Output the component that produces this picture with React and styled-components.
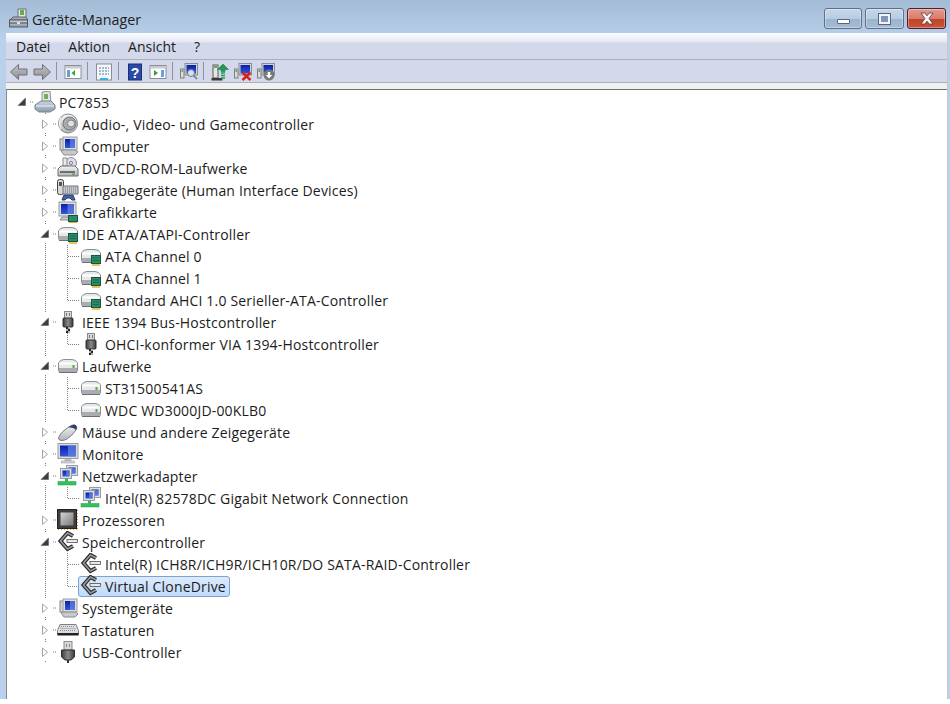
import React from 'react';
import styled, { createGlobalStyle } from 'styled-components';

const Global = createGlobalStyle`
  html, body { margin: 0; padding: 0; background: #fff; }
  body { font-family: "Open Sans", "Noto Sans", sans-serif; color: #1a1a1a; }
`;

const Frame = styled.div`
  width: 950px;
  height: 699px;
  display: flex;
  flex-direction: column;
  box-sizing: border-box;
  padding: 0 2px 0 6px;
  background: linear-gradient(to bottom, #a4bbd6 0, #b9d1ea 40px, #b9d1ea 100%);
`;
const TitleBar = styled.div`
  height: 33px;
  flex: none;
  display: flex;
  align-items: flex-start;
  padding: 8px 2px 0 2px;
  box-sizing: border-box;
`;
const Title = styled.div`
  margin-left: 3px;
  font-size: 14.3px;
  line-height: 23px;
  color: #222;
`;
const WinButtons = styled.div`
  margin-left: auto;
  display: flex;
  gap: 3px;
`;
const WinButton = styled.div`
  width: ${p => p.$w}px;
  height: 21px;
  box-sizing: border-box;
  display: flex;
  align-items: center;
  justify-content: center;
  border-radius: 3px;
  border: 1px solid ${p => (p.$close ? '#4e1f2b' : '#5f7088')};
  box-shadow: inset 0 0 0 1px rgba(255, 255, 255, 0.35);
  background: ${p =>
    p.$close
      ? 'linear-gradient(to bottom, #e39a8e 0, #d87c6c 50%, #bf4326 52%, #c9553a 100%)'
      : 'linear-gradient(to bottom, #c6d7e9 0, #b8cde2 50%, #9cb5cf 52%, #a4bcd5 100%)'};
`;
const MinGlyph = styled.div`
  width: 13px;
  height: 5px;
  margin-top: 6px;
  box-sizing: border-box;
  background: #fff;
  border: 1px solid #56657c;
  border-radius: 1px;
`;
const MaxGlyph = styled.div`
  width: 13px;
  height: 12px;
  box-sizing: border-box;
  background: #7f97b8;
  border: 3px solid #f2f4f7;
  outline: 1px solid #56657c;
  outline-offset: -1px;
`;
const Client = styled.div`
  flex: 1;
  display: flex;
  flex-direction: column;
  min-height: 0;
  background: #f0f0f0;
  border-right: 1px solid #c8c8c8;
`;
const MenuBar = styled.div`
  height: 27px;
  flex: none;
  box-sizing: border-box;
  display: flex;
  align-items: center;
  padding: 1px 0 0 1px;
  font-size: 14px;
  background: linear-gradient(to bottom, #fbfcfe 0, #e4e8f4 9px, #d3d9eb 10px, #d3d9eb 100%);
  border-bottom: 1px solid #adb0bc;
`;
const MenuItem = styled.div`
  padding: 0 9px;
  color: #1c1c1c;
`;
const ToolBar = styled.div`
  height: 23px;
  flex: none;
  box-sizing: border-box;
  display: flex;
  align-items: center;
  padding: 1px 0 0 1.5px;
  background: #d3d9eb;
  border-bottom: 1px solid #adb0bc;
`;
const ToolButton = styled.div`
  width: 23px;
  height: 22px;
  display: flex;
  align-items: center;
  justify-content: center;
`;
const ToolSep = styled.div`
  width: 1px;
  height: 18px;
  margin: -1px 4.5px 0 2.5px;
  background: #8f929c;
`;
const Band = styled.div`
  height: 6px;
  flex: none;
  background: #f0f0f0;
`;
const Tree = styled.div`
  flex: 1;
  min-height: 0;
  background: #fff;
  border-top: 1px solid #6f6f6f;
  border-left: 1px solid #8a8a8a;
  padding: 1px 0 0 4px;
  font-size: 14px;
`;
const Row = styled.div`
  height: 22px;
  display: flex;
  align-items: center;
`;

const dotsV = 'repeating-linear-gradient(to bottom, #7d7d7d 0 1px, transparent 1px 2px)';
const dotsH = 'repeating-linear-gradient(to right, #7d7d7d 0 1px, transparent 1px 2px)';

// guide cell: $line is the shape of the dotted line that runs through it
const Cell = styled.div`
  width: 23px;
  height: 22px;
  flex: none;
  background-repeat: no-repeat;
  ${p => p.$line === 'pipe' && `
    background-image: ${dotsV};
    background-size: 1px 22px;
    background-position: 11px 0;
  `}
  ${p => p.$line === 'tee' && `
    background-image: ${dotsV}, ${dotsH};
    background-size: 1px 22px, 11px 1px;
    background-position: 10px 0, 11px 11px;
  `}
  ${p => p.$line === 'end' && `
    background-image: ${dotsV}, ${dotsH};
    background-size: 1px 12px, 11px 1px;
    background-position: 10px 0, 11px 11px;
  `}
`;
const Label = styled.div`
  display: flex;
  align-items: center;
  height: 21px;
  box-sizing: border-box;
  margin-left: -2px;
  padding: 0 3px 0 1px;
  border: 1px solid ${p => (p.$selected ? '#7da2ce' : 'transparent')};
  border-radius: 3px;
  background: ${p => (p.$selected ? 'linear-gradient(to bottom, #dcebfc, #c1dbfc)' : 'transparent')};
`;
const IconBox = styled.div`
  width: 22px;
  height: 20px;
  flex: none;
  display: flex;
  align-items: center;
  justify-content: center;
`;
const Text = styled.span`
  margin-left: 3px;
  white-space: nowrap;
  letter-spacing: 0.18px;
  color: #1c1c1c;
`;
const Defs = styled.svg`
  display: block;
  width: 0;
  height: 0;
`;

const Ico = ({ size = 22, children }) => (
  <svg width={size} height={size} viewBox={`0 0 ${size} ${size}`}>{children}</svg>
);

const Drive = ({ chip }) => (
  <>
    <path d="M1.500 8Q3 4.500 7 4.500H15Q19 4.500 20.500 8V15Q20.500 17.500 18 17.500H4Q1.500 17.500 1.500 15Z" fill="#e7e9ea" stroke="#8b8f93" />
    <path d="M2 8.500H20" stroke="#fff" strokeWidth="2" />
    <rect x="2" y="13" width="18" height="4" fill="#a9adb1" />
    <path d="M2 17.500H20" stroke="#6c7074" />
    {chip ? (
      <>
        <rect x="11.500" y="10.500" width="9" height="8" fill="#2b8d68" stroke="#14573f" />
        <path d="M13.500 13h5M13.500 15.500h5" stroke="#0f4030" strokeDasharray="1 1" />
        <path d="M12 20H20" stroke="#e3b436" strokeWidth="1.600" />
      </>
    ) : (
      <rect x="15.500" y="10" width="2" height="3" fill="#58b030" />
    )}
  </>
);

const Plug = () => (
  <>
    <rect x="7.500" y="0.500" width="7" height="7" fill="#d8dadc" stroke="#8a8a8a" />
    <path d="M9.500 2v3M12.500 2v3" stroke="#777" />
    <rect x="6" y="7" width="10" height="9" rx="1" fill="url(#gDark)" stroke="#333" />
    <path d="M9 16h2v2H9zM11 18h2v2h-2zM9 20h2v2H9z" fill="#222" />
    <path d="M11 16h2v2h-2zM9 18h2v2H9zM11 20h2v2h-2z" fill="#b0b0b0" />
  </>
);

const Screen = ({ x = 3, y = 2, w = 15, h = 12 }) => (
  <>
    <rect x={x} y={y} width={w} height={h} fill="#dcdddd" stroke="#9a9c9f" />
    <rect x={x + 2} y={y + 2} width={w - 4} height={h - 4} fill="url(#gBlue)" />
    <rect x={x + 2 + (w - 4) / 2} y={y + 2} width={(w - 4) / 2} height={h - 4} fill="#6a86e6" opacity=".7" />
  </>
);

const Chevron = () => (
  <>
    <path d="M16 5L10.500 2 3.500 10l7 8 5.500-3" fill="none" stroke="#2c2c2c" strokeWidth="4" />
    <path d="M16 5L10.500 2 3.500 10l7 8 5.500-3" fill="none" stroke="#9a9a9a" strokeWidth="1.600" />
    <rect x="10" y="8.500" width="10.500" height="3" fill="#e8e8e8" stroke="#3a3a3a" strokeWidth=".7" />
  </>
);

const Pc = () => (
  <>
    <rect x="3" y="4" width="5" height="11" fill="#d5d6d8" stroke="#85888c" />
    <Screen x={6} y={2} w={14} h={13} />
    <path d="M4 16l2-1h12l3 2-3 3H7z" fill="#c7c9cc" stroke="#8a8c90" />
  </>
);

const icons = {
  pc: (
    <>
      <path d="M8 1l8-1 1 12H8z" fill="#e3e6e7" stroke="#8b9094" />
      <rect x="10" y="3" width="4" height="5" fill="#73b04e" />
      <path d="M1 14l6-4h10l4 4v4l-5 3H5l-4-3z" fill="url(#gSteel)" stroke="#75808c" />
      <path d="M2 15h18" stroke="#eef3f7" />
    </>
  ),
  audio: (
    <>
      <circle cx="11" cy="10.500" r="9.500" fill="url(#gSilver)" stroke="#85888c" />
      <circle cx="12.500" cy="10.500" r="6.500" fill="#a9acaf" stroke="#6f7276" />
      <circle cx="14" cy="10.500" r="3.500" fill="#e0e2e4" stroke="#808386" />
      <path d="M3.500 5Q1.500 10.500 3.500 16" fill="none" stroke="#fff" />
    </>
  ),
  computer: <Pc />,
  system: <Pc />,
  dvd: (
    <>
      <circle cx="14" cy="6" r="5.500" fill="#dcdde8" stroke="#8c8f99" />
      <circle cx="14" cy="6" r="1.500" fill="#fff" stroke="#777" />
      <path d="M6 1h4v8H6z" fill="#e9eaeb" stroke="#888" />
      <path d="M1 12l3-3h14l3 3v7H1z" fill="url(#gSilver)" stroke="#6a6d70" />
      <path d="M3 15h15" stroke="#444" strokeWidth="1.400" />
      <rect x="15" y="16.500" width="3" height="1.500" fill="#58b030" />
    </>
  ),
  input: (
    <>
      <rect x="0.500" y="0.500" width="6" height="15" rx="2" fill="#d8d9da" stroke="#444" />
      <rect x="2" y="3" width="3" height="4" fill="#555" />
      <path d="M6 7h15v8H6z" fill="#c6c9cc" stroke="#6f7378" />
      <path d="M8 9h11M8 11h11M8 13h11" stroke="#70757a" strokeDasharray="1 1" />
      <path d="M7 16h9l2 5h-3l-2-2h-3l-2 2H5z" fill="#4563a8" stroke="#2b3a66" />
    </>
  ),
  display: (
    <>
      <Screen x={2} y={1} w={17} h={14} />
      <path d="M5 16h10l2 3H3z" fill="#c6c8ca" stroke="#8d9094" />
      <rect x="11.500" y="14.500" width="9" height="6" fill="#2b8d68" stroke="#14573f" />
      <path d="M12 21.500h8" stroke="#e3b436" />
    </>
  ),
  ide: <Drive chip />,
  firewire: <Plug />,
  disk: <Drive />,
  mouse: (
    <>
      <path d="M1.500 18Q2 13 9 8q6-5 9-4 3 2 1 5-4 6-9 9-6 3-8.500 0z" fill="url(#gSilver)" stroke="#7a7d80" />
      <path d="M11 6.500q5-3.500 7.500-2.500 2.500 2 .5 5-2-3-8-2.500z" fill="#2f3f6f" />
    </>
  ),
  monitor: (
    <>
      <Screen x={1} y={0.500} w={20} h={15} />
      <path d="M8 16h6l1 2H7z" fill="#bcbec0" />
      <rect x="4.500" y="18" width="13" height="2" fill="#d5d6d7" stroke="#a0a2a4" strokeWidth=".6" />
    </>
  ),
  network: (
    <>
      <Screen x={9.500} y={0.500} w={11} h={10} />
      <Screen x={3.500} y={3.500} w={11} h={10} />
      <path d="M8 13.500h3v3H8z" fill="#35b55a" />
      <rect x="1" y="16.500" width="18" height="3.500" fill="#35c060" stroke="#2a9a4a" strokeWidth=".5" />
    </>
  ),
  cpu: (
    <>
      <rect x="0.500" y="0.500" width="19" height="19" fill="#3e3e3e" stroke="#222" />
      <rect x="3.500" y="3.500" width="13" height="13" fill="url(#gChip)" />
      <path d="M20.500 1v19" stroke="#d89a30" strokeDasharray="1 2" />
      <path d="M1 20.500h19" stroke="#d89a30" strokeDasharray="1 2" />
    </>
  ),
  storage: <Chevron />,
  keyboard: (
    <>
      <path d="M3 5.500h16l2.500 6v4H.500v-4z" fill="#dcdee2" stroke="#7d8084" />
      <path d="M4 7.500h14M3.500 9.500h15M3 11.500h16" stroke="#8a8e94" strokeDasharray="1 1" />
      <path d="M.500 14h21v2.500H.500z" fill="#222" />
    </>
  ),
  usb: (
    <>
      <rect x="7" y="0.500" width="8" height="8.500" fill="#d6d8da" stroke="#8a8c8e" />
      <path d="M9.500 3v3M12.500 3v3" stroke="#888" />
      <path d="M4.500 9h13v7l-3.500 3h-6l-3.500-3z" fill="url(#gDark)" stroke="#2e2e2e" />
      <rect x="10" y="19" width="2" height="3" fill="#333" />
    </>
  ),
};

const TreeIcon = ({ type }) => <Ico>{icons[type]}</Ico>;

const Twisty = ({ open }) => (
  <svg width="23" height="22" viewBox="0 0 23 22">
    <rect x="4" y="2" width="15" height="18" fill="#fff" />
    <path d="M19 11h3" stroke="#7d7d7d" strokeDasharray="1 1" />
    {open ? (
      <path d="M7 14.500L14.500 14.500V7Z" fill="#3c3c3c" stroke="#6a6a6a" strokeWidth=".7" />
    ) : (
      <path d="M8.500 7V15.500L13.500 11.200Z" fill="#fff" stroke="#a6a6a6" />
    )}
  </svg>
);

const ToolIcon = ({ children }) => <Ico size={18}>{children}</Ico>;

const Panel = ({ arrow }) => (
  <>
    <rect x="1" y="2.500" width="16" height="13" fill="#fff" stroke="#8a8f96" />
    <rect x="1.500" y="3" width="15" height="2.500" fill="#c7cad0" />
    {arrow}
  </>
);
const MiniMonitor = () => (
  <>
    <rect x="0.500" y="6" width="3.500" height="9" fill="#dcdcdc" stroke="#7f7f7f" />
    <rect x="1.500" y="7" width="1.500" height="2" fill="#5fb040" />
    <rect x="5" y="0.500" width="12.500" height="11.500" fill="#d0d2d6" stroke="#8a8d92" />
    <rect x="6.500" y="2" width="9.500" height="8.500" fill="url(#gBlue)" />
  </>
);

const Back = ({ flip }) => (
  <ToolIcon>
    <path
      d={flip ? 'M9.500 1.500l8 7.500-8 7.500v-4.500H1V6h8.500z' : 'M8.500 1.500L.500 9l8 7.500V12H17V6H8.500z'}
      fill="url(#gArrow)"
      stroke="#6f7075"
    />
  </ToolIcon>
);

const tree = [
  { type: 'audio', text: 'Audio-, Video- und Gamecontroller' },
  { type: 'computer', text: 'Computer' },
  { type: 'dvd', text: 'DVD/CD-ROM-Laufwerke' },
  { type: 'input', text: 'Eingabegeräte (Human Interface Devices)' },
  { type: 'display', text: 'Grafikkarte' },
  {
    type: 'ide',
    text: 'IDE ATA/ATAPI-Controller',
    children: [
      { type: 'ide', text: 'ATA Channel 0' },
      { type: 'ide', text: 'ATA Channel 1' },
      { type: 'ide', text: 'Standard AHCI 1.0 Serieller-ATA-Controller' },
    ],
  },
  {
    type: 'firewire',
    text: 'IEEE 1394 Bus-Hostcontroller',
    children: [{ type: 'firewire', text: 'OHCI-konformer VIA 1394-Hostcontroller' }],
  },
  {
    type: 'disk',
    text: 'Laufwerke',
    children: [
      { type: 'disk', text: 'ST31500541AS' },
      { type: 'disk', text: 'WDC WD3000JD-00KLB0' },
    ],
  },
  { type: 'mouse', text: 'Mäuse und andere Zeigegeräte' },
  { type: 'monitor', text: 'Monitore' },
  {
    type: 'network',
    text: 'Netzwerkadapter',
    children: [{ type: 'network', text: 'Intel(R) 82578DC Gigabit Network Connection' }],
  },
  { type: 'cpu', text: 'Prozessoren' },
  {
    type: 'storage',
    text: 'Speichercontroller',
    children: [
      { type: 'storage', text: 'Intel(R) ICH8R/ICH9R/ICH10R/DO SATA-RAID-Controller' },
      { type: 'storage', text: 'Virtual CloneDrive', selected: true },
    ],
  },
  { type: 'system', text: 'Systemgeräte' },
  { type: 'keyboard', text: 'Tastaturen' },
  { type: 'usb', text: 'USB-Controller' },
];

const menus = ['Datei', 'Aktion', 'Ansicht', '?'];

const App = () => (
  <>
    <Global />
    <Frame>
      <Defs>
        <defs>
          <linearGradient id="gSilver" x1="0" y1="0" x2="0" y2="1">
            <stop offset="0" stopColor="#f4f5f6" />
            <stop offset="1" stopColor="#b0b3b7" />
          </linearGradient>
          <linearGradient id="gSteel" x1="0" y1="0" x2="0" y2="1">
            <stop offset="0" stopColor="#c9d6e0" />
            <stop offset="1" stopColor="#8c9cab" />
          </linearGradient>
          <linearGradient id="gDark" x1="0" y1="0" x2="1" y2="0">
            <stop offset="0" stopColor="#3b3b3b" />
            <stop offset=".5" stopColor="#8a8a8a" />
            <stop offset="1" stopColor="#3b3b3b" />
          </linearGradient>
          <linearGradient id="gBlue" x1="0" y1="0" x2="0" y2="1">
            <stop offset="0" stopColor="#0a1fa8" />
            <stop offset="1" stopColor="#2f57d8" />
          </linearGradient>
          <linearGradient id="gChip" x1="0" y1="0" x2="1" y2="1">
            <stop offset="0" stopColor="#d5d5d5" />
            <stop offset="1" stopColor="#777" />
          </linearGradient>
          <linearGradient id="gArrow" x1="0" y1="0" x2="0" y2="1">
            <stop offset="0" stopColor="#c4c5c8" />
            <stop offset="1" stopColor="#8d8e92" />
          </linearGradient>
        </defs>
      </Defs>
      <TitleBar>
        <svg width="21" height="21" viewBox="0 0 21 21">
          <path d="M10 1h8v9h-8z" fill="#e3e5e6" stroke="#6c6f72" />
          <rect x="12" y="2" width="4" height="5" fill="#5db04a" />
          <path d="M5 9h13l2 3H2z" fill="#a9b0b6" stroke="#5c6066" />
          <rect x="1.500" y="12" width="18" height="7" fill="url(#gSteel)" stroke="#55595e" />
          <path d="M2 15h17" stroke="#4a4e52" />
          <rect x="9" y="14" width="3" height="2" fill="#dfe3e6" />
        </svg>
        <Title>Geräte-Manager</Title>
        <WinButtons>
          <WinButton $w={38}><MinGlyph /></WinButton>
          <WinButton $w={39}><MaxGlyph /></WinButton>
          <WinButton $w={39} $close>
            <svg width="14" height="13" viewBox="0 0 14 13">
              <path d="M1 1h3.800L7 3.800 9.200 1H13L9 6.500l4 5.500H9.200L7 9.200 4.800 12H1l4-5.500z" fill="#f6f6f6" stroke="#5b3a3a" strokeWidth=".8" />
            </svg>
          </WinButton>
        </WinButtons>
      </TitleBar>
      <Client>
        <MenuBar>
          {menus.map(m => <MenuItem key={m}>{m}</MenuItem>)}
        </MenuBar>
        <ToolBar>
          <ToolButton><Back /></ToolButton>
          <ToolButton><Back flip /></ToolButton>
          <ToolSep />
          <ToolButton>
            <ToolIcon>
              <Panel arrow={<><rect x="3" y="7" width="3" height="7" fill="#6aa0d8" /><path d="M11 7v6L7.500 10z" fill="#3aa03a" /></>} />
            </ToolIcon>
          </ToolButton>
          <ToolSep />
          <ToolButton>
            <ToolIcon>
              <rect x="1.500" y="1" width="15" height="16" fill="#f6f7fa" stroke="#8a8d92" />
              <path d="M4 5h10M4 8h10M4 11h10" stroke="#4c79b8" strokeDasharray="2 1" />
              <rect x="5" y="15" width="8" height="2" fill="#3cb0e8" />
            </ToolIcon>
          </ToolButton>
          <ToolSep />
          <ToolButton>
            <ToolIcon>
              <rect x="2.500" y="1" width="13" height="16" fill="#2a4aa8" stroke="#1a2f78" />
              <text x="9" y="14.500" textAnchor="middle" fontSize="14" fontWeight="700" fill="#fff" fontFamily="Liberation Sans, sans-serif">?</text>
            </ToolIcon>
          </ToolButton>
          <ToolButton>
            <ToolIcon>
              <Panel arrow={<><path d="M5 7v6l4-3z" fill="#3aa03a" /><rect x="12" y="7" width="3" height="7" fill="#6aa0d8" /></>} />
            </ToolIcon>
          </ToolButton>
          <ToolSep />
          <ToolButton>
            <ToolIcon>
              <MiniMonitor />
              <circle cx="11" cy="10" r="3.500" fill="#cfe3f5" stroke="#6d7a88" />
              <path d="M13.500 12.500L17 16" stroke="#6d7a88" strokeWidth="1.600" />
            </ToolIcon>
          </ToolButton>
          <ToolSep />
          <ToolButton>
            <ToolIcon>
              <rect x="2" y="2" width="5" height="13" fill="#e6e6e6" stroke="#5a5a5a" />
              <rect x="3" y="3" width="3" height="2" fill="#5db04a" />
              <rect x="0.500" y="15" width="11" height="2.500" fill="#3a3a3a" />
              <path d="M12 1l5.500 5.500h-3.500v2h-4v-2H6.500z" fill="#1f9a55" stroke="#107040" strokeWidth=".5" />
              <path d="M10 10h4M10 12.500h4M10 15h4" stroke="#1f9a55" strokeWidth="1.500" />
            </ToolIcon>
          </ToolButton>
          <ToolButton>
            <ToolIcon>
              <MiniMonitor />
              <path d="M8.500 9.500l8 7.500M16.500 9.500l-8 7.500" stroke="#d81f1f" strokeWidth="2.400" />
            </ToolIcon>
          </ToolButton>
          <ToolButton>
            <ToolIcon>
              <MiniMonitor />
              <circle cx="12" cy="12" r="5.500" fill="#77797d" />
              <path d="M10.800 9h2.400v3h2l-3.200 3.500L8.800 12h2z" fill="#fff" />
            </ToolIcon>
          </ToolButton>
        </ToolBar>
        <Band />
        <Tree>
          <Row>
            <Cell><Twisty open /></Cell>
            <Label><IconBox><TreeIcon type="pc" /></IconBox><Text>PC7853</Text></Label>
          </Row>
          {tree.map(node => (
            <React.Fragment key={node.text}>
              <Row>
                <Cell />
                <Cell $line="pipe"><Twisty open={!!node.children} /></Cell>
                <Label><IconBox><TreeIcon type={node.type} /></IconBox><Text>{node.text}</Text></Label>
              </Row>
              {node.children && node.children.map((child, i) => (
                <Row key={child.text}>
                  <Cell />
                  <Cell $line="pipe" />
                  <Cell $line={i === node.children.length - 1 ? 'end' : 'tee'} />
                  <Label $selected={child.selected}>
                    <IconBox><TreeIcon type={child.type} /></IconBox>
                    <Text>{child.text}</Text>
                  </Label>
                </Row>
              ))}
            </React.Fragment>
          ))}
        </Tree>
      </Client>
    </Frame>
  </>
);

export default App;
